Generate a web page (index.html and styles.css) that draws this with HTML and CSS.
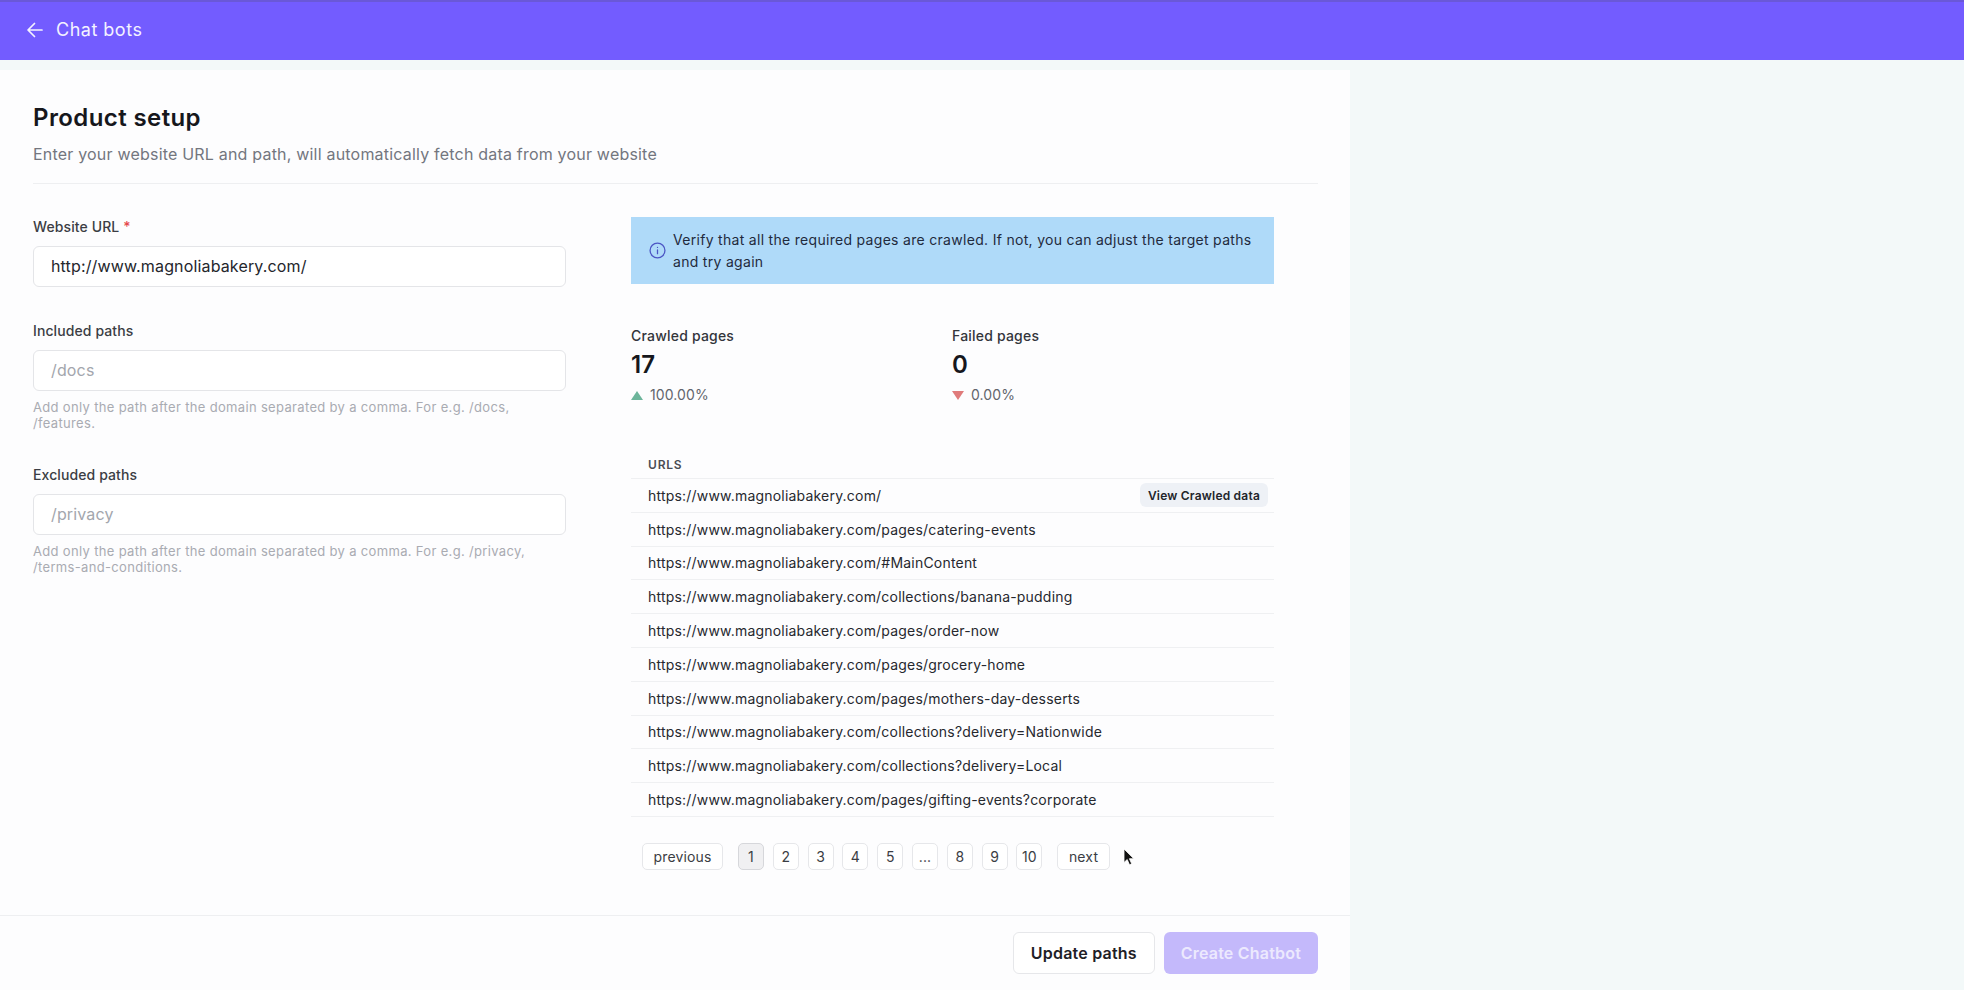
FILE: index.html
```html
<!DOCTYPE html>
<html lang="en">
<head>
    <meta charset="UTF-8">
    <meta name="viewport" content="width=device-width, initial-scale=1.0">
    <title>Product setup</title>
    <link rel="stylesheet" href="styles.css">
</head>
<body>
    <header class="topbar">
        <svg class="back-icon" viewBox="0 0 20 20" fill="none" stroke="currentColor" stroke-width="1.7" stroke-linecap="round" stroke-linejoin="round">
            <path d="M17 10H3.500M9.500 3.500 3 10l6.500 6.500"/>
        </svg>
        <span class="topbar-title">Chat bots</span>
    </header>

    <div class="workspace">
        <main class="panel">
            <div class="panel-body">
                <div class="panel-head">
                    <h1 class="panel-title">Product setup</h1>
                    <p class="panel-sub">Enter your website URL and path, will automatically fetch data from your website</p>
                </div>

                <div class="columns">
                    <form class="form-col">
                        <div class="field">
                            <label class="field-label">Website URL <span class="required">*</span></label>
                            <input class="field-input" type="text" value="http://www.magnoliabakery.com/">
                        </div>
                        <div class="field">
                            <label class="field-label">Included paths</label>
                            <input class="field-input" type="text" placeholder="/docs">
                            <p class="field-help">Add only the path after the domain separated by a comma. For e.g. /docs, /features.</p>
                        </div>
                        <div class="field">
                            <label class="field-label">Excluded paths</label>
                            <input class="field-input" type="text" placeholder="/privacy">
                            <p class="field-help">Add only the path after the domain separated by a comma. For e.g. /privacy, /terms-and-conditions.</p>
                        </div>
                    </form>

                    <section class="result-col">
                        <div class="alert">
                            <svg class="alert-icon" viewBox="0 0 16 16" fill="none" stroke="currentColor" stroke-width="1.2" stroke-linecap="round">
                                <circle cx="8" cy="8" r="7"/>
                                <path d="M8 7.500v3.500M8 5v.1"/>
                            </svg>
                            <p class="alert-text">Verify that all the required pages are crawled. If not, you can adjust the target paths and try again</p>
                        </div>

                        <div class="stats">
                            <div class="stat">
                                <div class="stat-label">Crawled pages</div>
                                <div class="stat-value">17</div>
                                <div class="stat-change"><span class="arrow-up"></span>100.00%</div>
                            </div>
                            <div class="stat">
                                <div class="stat-label">Failed pages</div>
                                <div class="stat-value">0</div>
                                <div class="stat-change"><span class="arrow-down"></span>0.00%</div>
                            </div>
                        </div>

                        <div class="url-table">
                            <div class="url-head">URLS</div>
                            <div class="url-row">https://www.magnoliabakery.com/<button class="view-btn" type="button">View Crawled data</button></div>
                            <div class="url-row">https://www.magnoliabakery.com/pages/catering-events</div>
                            <div class="url-row">https://www.magnoliabakery.com/#MainContent</div>
                            <div class="url-row">https://www.magnoliabakery.com/collections/banana-pudding</div>
                            <div class="url-row">https://www.magnoliabakery.com/pages/order-now</div>
                            <div class="url-row">https://www.magnoliabakery.com/pages/grocery-home</div>
                            <div class="url-row">https://www.magnoliabakery.com/pages/mothers-day-desserts</div>
                            <div class="url-row">https://www.magnoliabakery.com/collections?delivery=Nationwide</div>
                            <div class="url-row">https://www.magnoliabakery.com/collections?delivery=Local</div>
                            <div class="url-row">https://www.magnoliabakery.com/pages/gifting-events?corporate</div>
                        </div>

                        <nav class="pager">
                            <button class="page-btn page-wide" type="button">previous</button>
                            <div class="page-nums">
                                <button class="page-btn page-current" type="button">1</button>
                                <button class="page-btn" type="button">2</button>
                                <button class="page-btn" type="button">3</button>
                                <button class="page-btn" type="button">4</button>
                                <button class="page-btn" type="button">5</button>
                                <button class="page-btn" type="button">...</button>
                                <button class="page-btn" type="button">8</button>
                                <button class="page-btn" type="button">9</button>
                                <button class="page-btn" type="button">10</button>
                            </div>
                            <button class="page-btn page-wide" type="button">next</button>
                            <svg class="cursor" viewBox="0 0 12 18">
                                <path d="M1 1v13.500l3.200-3 2.300 5.300 2.200-1-2.300-5.100h4.400z" fill="#111" stroke="#fff" stroke-width=".8"/>
                            </svg>
                        </nav>
                    </section>
                </div>
            </div>

            <footer class="panel-foot">
                <button class="btn btn-light" type="button">Update paths</button>
                <button class="btn btn-primary" type="button">Create Chatbot</button>
            </footer>
        </main>
    </div>
</body>
</html>
```

FILE: styles.css
```css
* {
    box-sizing: border-box;
}

body {
    display: flex;
    flex-direction: column;
    height: 100vh;
    margin: 0;
    overflow: hidden;
    background-color: #f3f9f9;
    font-family: Inter, "Liberation Sans", sans-serif;
    color: #16171c;
}

.topbar {
    display: flex;
    align-items: center;
    flex: none;
    height: 60px;
    padding-left: 25px;
    padding-bottom: 3px;
    background-color: #735cff;
    border-top: 2px solid #6a58d8;
    color: #f4f2ff;
}

.back-icon {
    width: 20px;
    height: 20px;
}

.topbar-title {
    margin-left: 11px;
    font-size: 18px;
    letter-spacing: .5px;
}

.workspace {
    display: flex;
    flex: 1;
    min-height: 0;
    padding-top: 10px;
}

.panel {
    display: flex;
    flex-direction: column;
    width: 1350px;
    background-color: #fdfdfe;
}

.panel-body {
    flex: 1;
    padding: 32px 32px 0 33px;
}

.panel-head {
    padding-bottom: 17px;
    border-bottom: 1px solid #eeeff1;
}

.panel-title {
    margin: 0;
    font-size: 24px;
    font-weight: 600;
    line-height: 32px;
    letter-spacing: .4px;
}

.panel-sub {
    margin: 8px 0 0;
    font-size: 16px;
    line-height: 24px;
    letter-spacing: .2px;
    color: #73767e;
}

.columns {
    display: flex;
    gap: 65px;
    margin-top: 33px;
}

.form-col {
    display: flex;
    flex-direction: column;
    gap: 34px;
    width: 533px;
}

.field-label {
    display: block;
    margin-bottom: 8.500px;
    font-size: 14px;
    font-weight: 500;
    line-height: 20px;
    letter-spacing: .1px;
    color: #3b3d44;
}

.required {
    color: #e5484d;
}

.field-input {
    display: block;
    width: 100%;
    height: 41.500px;
    padding: 0 17px;
    background-color: #fff;
    border: 1px solid #e4e5e8;
    border-radius: 6px;
    font-family: inherit;
    font-size: 16px;
    letter-spacing: .15px;
    color: #24262c;
}

.field-input::placeholder {
    color: #a3a6ad;
}

.field-help {
    margin: 8px 0 0;
    font-size: 13px;
    line-height: 16px;
    letter-spacing: .33px;
    color: #a9abb2;
}

.result-col {
    width: 643px;
}

.alert {
    display: flex;
    align-items: center;
    gap: 7px;
    height: 67px;
    padding: 0 16px 0 18px;
    background-color: #afdaf9;
}

.alert-icon {
    flex: none;
    width: 17px;
    height: 17px;
    color: #4c55c4;
}

.alert-text {
    margin: 0;
    font-size: 14px;
    line-height: 22px;
    letter-spacing: .3px;
    color: #1f2a3d;
}

.stats {
    display: flex;
    margin-top: 42px;
}

.stat {
    width: 321px;
}

.stat-label {
    font-size: 14px;
    font-weight: 500;
    line-height: 20px;
    letter-spacing: .2px;
    color: #33353b;
}

.stat-value {
    margin-top: 3px;
    font-size: 24px;
    font-weight: 600;
    line-height: 32px;
}

.stat-change {
    display: flex;
    align-items: center;
    gap: 7px;
    margin-top: 4px;
    font-size: 14px;
    line-height: 20px;
    letter-spacing: .1px;
    color: #62656c;
}

.arrow-up {
    width: 0;
    height: 0;
    border-left: 6px solid transparent;
    border-right: 6px solid transparent;
    border-bottom: 9px solid #6db59b;
}

.arrow-down {
    width: 0;
    height: 0;
    border-left: 6px solid transparent;
    border-right: 6px solid transparent;
    border-top: 9px solid #e07b7b;
}

.url-table {
    margin-top: 52px;
}

.url-head {
    height: 22px;
    padding-left: 17px;
    border-bottom: 1px solid #eff0f2;
    font-size: 12px;
    font-weight: 600;
    line-height: 16px;
    letter-spacing: .8px;
    color: #4a4c53;
}

.url-row {
    display: flex;
    align-items: center;
    justify-content: space-between;
    height: 33.800px;
    padding: 0 6px 0 17px;
    border-bottom: 1px solid #eff0f2;
    font-size: 14px;
    letter-spacing: .2px;
    color: #26282e;
}

.view-btn {
    height: 24px;
    padding: 0 8px;
    background-color: #eef1f6;
    border: 0;
    border-radius: 6px;
    font-family: inherit;
    font-size: 12px;
    font-weight: 600;
    letter-spacing: .2px;
    color: #23252b;
}

.pager {
    position: relative;
    display: flex;
    gap: 15px;
    margin-top: 26px;
    padding-left: 11px;
}

.page-nums {
    display: flex;
    gap: 8.800px;
}

.page-btn {
    width: 26px;
    height: 27px;
    padding: 0;
    background-color: #fff;
    border: 1px solid #e6e7ea;
    border-radius: 5px;
    font-family: inherit;
    font-size: 14px;
    letter-spacing: .15px;
    color: #3b3d44;
}

.page-wide {
    width: auto;
    padding: 0 10.500px;
}

.page-current {
    background-color: #f0f0f2;
    border-color: #d6d7db;
}

.cursor {
    position: absolute;
    left: 492px;
    top: 5px;
    width: 12px;
    height: 18px;
}

.panel-foot {
    display: flex;
    justify-content: flex-end;
    gap: 9px;
    flex: none;
    height: 75px;
    padding: 16px 32px 0 33px;
    border-top: 1px solid #eeeff1;
}

.btn {
    height: 42px;
    padding: 0 17px;
    border-radius: 6px;
    font-family: inherit;
    font-size: 16px;
    font-weight: 600;
    letter-spacing: .2px;
}

.btn-light {
    background-color: #fff;
    border: 1px solid #e6e7ea;
    color: #1e2026;
}

.btn-primary {
    background-color: #c4b9fb;
    border: 0;
    color: #ece9fe;
}
```
